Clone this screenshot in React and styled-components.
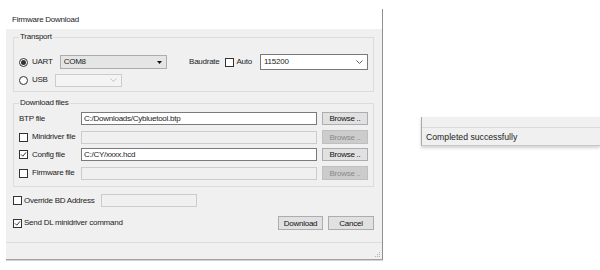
import React from 'react';
import styled, { createGlobalStyle } from 'styled-components';

const GlobalStyle = createGlobalStyle`
  html, body {
    margin: 0;
    padding: 0;
    background: #fff;
  }
  body {
    font-family: "Liberation Sans", Arial, sans-serif;
    font-size: 8px;
    color: #1c1c1c;
  }
`;

const Page = styled.div`
  display: flex;
  align-items: flex-start;
  width: 600px;
  height: 270px;
  overflow: hidden;
`;

const Dialog = styled.div`
  margin: 9px 0 0 6px;
  width: 377px;
  box-sizing: border-box;
  display: flex;
  flex-direction: column;
  background: #f0f0f0;
  border-right: 1px solid #8f8f8f;
  border-bottom: 1px solid #a0a0a0;
  box-shadow: 0 1px 0 #d4d4d4;
  letter-spacing: -0.25px;
`;

const TitleBar = styled.div`
  height: 20px;
  display: flex;
  align-items: center;
  padding-left: 6px;
  background: #fff;
`;

const Body = styled.div`
  display: flex;
  flex-direction: column;
  padding: 3px 8px 12px 7px;
`;

const Group = styled.fieldset`
  margin: ${p => (p.$first ? '0' : '6px 0 0')};
  padding: ${p => p.$pad};
  border: 1px solid #dcdcdc;
  min-width: 0;
  display: flex;
  flex-direction: column;
  gap: ${p => p.$gap}px;
`;

const Legend = styled.legend`
  padding: 0 1px;
  line-height: 10px;
  font-size: 8px;
`;

const Row = styled.div`
  display: flex;
  align-items: center;
  height: ${p => p.$h}px;
`;

const Text = styled.span`
  margin-left: ${p => p.$ml || 0}px;
  white-space: nowrap;
  line-height: 10px;
`;

const RadioCircle = styled.span`
  width: 9px;
  height: 9px;
  box-sizing: border-box;
  border: 1px solid #333;
  border-radius: 50%;
  background: #fff;
  display: inline-flex;
  align-items: center;
  justify-content: center;
  flex: none;
  &::after {
    content: '';
    width: 5px;
    height: 5px;
    border-radius: 50%;
    background: ${p => (p.$on ? '#333' : 'transparent')};
  }
`;

const Box = styled.span`
  width: 9px;
  height: 9px;
  box-sizing: border-box;
  border: 1px solid #333;
  background: #fff;
  display: inline-flex;
  flex: none;
  margin-left: ${p => p.$ml || 0}px;
`;

const CheckBox = ({ on, ml }) => (
  <Box $ml={ml}>
    {on && (
      <svg width="7" height="7" viewBox="0 0 7 7">
        <path d="M1 3.4 L2.8 5.2 L6 1.4" fill="none" stroke="#333" strokeWidth="1" />
      </svg>
    )}
  </Box>
);

const comboLook = {
  readonly: { bg: '#e5e5e5', bd: '#adadad' },
  edit: { bg: '#fff', bd: '#7a7a7a' },
  disabled: { bg: '#f4f4f4', bd: '#cccccc' },
};

const ComboBox = styled.div`
  margin-left: ${p => p.$ml || 0}px;
  width: ${p => p.$w}px;
  height: ${p => p.$h}px;
  box-sizing: border-box;
  display: flex;
  align-items: center;
  justify-content: space-between;
  padding: 0 4px 0 3px;
  background: ${p => comboLook[p.$kind].bg};
  border: 1px solid ${p => comboLook[p.$kind].bd};
  flex: none;
`;

const Combo = ({ kind, w, h, ml, value }) => (
  <ComboBox $kind={kind} $w={w} $h={h} $ml={ml}>
    <Text>{value}</Text>
    {kind === 'readonly' ? (
      <svg width="5" height="3" viewBox="0 0 5 3">
        <path d="M0 0 H5 L2.5 3 Z" fill="#111" />
      </svg>
    ) : (
      <svg width="7" height="4" viewBox="0 0 7 4">
        <path d="M0.5 0.5 L3.5 3.5 L6.5 0.5" fill="none" stroke={kind === 'edit' ? '#606060' : '#c4c4c4'} strokeWidth="1" />
      </svg>
    )}
  </ComboBox>
);

const BaudBlock = styled.div`
  margin-left: auto;
  display: flex;
  align-items: center;
`;

const FileGrid = styled.div`
  display: grid;
  grid-template-columns: 57px 1fr 46px;
  column-gap: 5px;
  align-items: center;
  height: 13px;
`;

const FileLabel = styled.div`
  display: flex;
  align-items: center;
  white-space: nowrap;
`;

const Field = styled.div`
  height: 13px;
  box-sizing: border-box;
  border: 1px solid ${p => (p.$disabled ? '#cccccc' : '#7a7a7a')};
  background: ${p => (p.$disabled ? '#f0f0f0' : '#fff')};
  padding-left: 2px;
  line-height: 11px;
  white-space: nowrap;
  overflow: hidden;
  width: ${p => (p.$w ? `${p.$w}px` : 'auto')};
`;

const Button = styled.div`
  width: ${p => p.$w}px;
  height: ${p => p.$h}px;
  box-sizing: border-box;
  display: flex;
  align-items: center;
  justify-content: center;
  background: ${p => (p.$disabled ? '#cccccc' : '#e1e1e1')};
  border: 1px solid ${p => (p.$disabled ? '#bfbfbf' : '#adadad')};
  color: ${p => (p.$disabled ? '#8a8a8a' : '#111')};
  white-space: nowrap;
`;

const OverrideRow = styled.div`
  margin-top: 7px;
  display: grid;
  grid-template-columns: 88px 96px;
  align-items: center;
  height: 13px;
`;

const SendRow = styled.div`
  margin-top: 9px;
  display: flex;
  align-items: center;
  height: 14px;
`;

const Actions = styled.div`
  margin-left: auto;
  display: flex;
  gap: 5px;
`;

const StatusStrip = styled.div`
  height: 15px;
  border-top: 1px solid #dcdcdc;
  display: flex;
  justify-content: flex-end;
  align-items: flex-end;
  padding: 0 1px 1px 0;
`;

const Fragment = styled.div`
  margin: 117px 0 0 38px;
  flex: 1;
  background: #f0f0f0;
  border-left: 1px solid #a8a8a8;
  border-bottom: 1px solid #c8c8c8;
  box-shadow: 0 2px 3px rgba(0, 0, 0, 0.18);
  display: flex;
  flex-direction: column;
`;

const FragmentTop = styled.div`
  height: 10px;
  border-bottom: 1px solid #d9d9d9;
`;

const StatusText = styled.div`
  height: 17px;
  display: flex;
  align-items: center;
  padding-left: 4px;
  font-size: 8.7px;
  color: #222;
`;

const files = [
  { label: 'BTP file', check: null, value: 'C:/Downloads/Cybluetool.btp' },
  { label: 'Minidriver file', check: false, value: '' },
  { label: 'Config file', check: true, value: 'C:/CY/xxxx.hcd' },
  { label: 'Firmware file', check: false, value: '' },
];

export default function App() {
  return (
    <Page>
      <GlobalStyle />
      <Dialog>
        <TitleBar>Firmware Download</TitleBar>
        <Body>
          <Group $first $pad="12px 5px 4px" $gap={3}>
            <Legend>Transport</Legend>
            <Row $h={16}>
              <RadioCircle $on />
              <Text $ml={4}>UART</Text>
              <Combo kind="readonly" w={107} h={14} ml={7} value="COM8" />
              <BaudBlock>
                <Text>Baudrate</Text>
                <CheckBox ml={5} />
                <Text $ml={3}>Auto</Text>
                <Combo kind="edit" w={108} h={16} ml={8} value="115200" />
              </BaudBlock>
            </Row>
            <Row $h={14}>
              <RadioCircle />
              <Text $ml={4}>USB</Text>
              <Combo kind="disabled" w={67} h={13} ml={7} value="" />
            </Row>
          </Group>

          <Group $pad="4px 5px 7px" $gap={5}>
            <Legend>Download files</Legend>
            {files.map(f => {
              const off = f.check === false;
              return (
                <FileGrid key={f.label}>
                  <FileLabel>
                    {f.check !== null && <CheckBox on={f.check} />}
                    <Text $ml={f.check !== null ? 4 : 0}>{f.label}</Text>
                  </FileLabel>
                  <Field $disabled={off}>{f.value}</Field>
                  <Button $w={46} $h={off ? 14 : 13} $disabled={off}>Browse ..</Button>
                </FileGrid>
              );
            })}
          </Group>

          <OverrideRow>
            <FileLabel>
              <CheckBox />
              <Text $ml={2}>Override BD Address</Text>
            </FileLabel>
            <Field $disabled $w={96} />
          </OverrideRow>

          <SendRow>
            <CheckBox on />
            <Text $ml={2}>Send DL minidriver command</Text>
            <Actions>
              <Button $w={45} $h={14}>Download</Button>
              <Button $w={46} $h={14}>Cancel</Button>
            </Actions>
          </SendRow>
        </Body>
        <StatusStrip>
          <svg width="7" height="7" viewBox="0 0 7 7">
            <g fill="#b4b4b4">
              <rect x="5" y="1" width="1" height="1" />
              <rect x="3" y="3" width="1" height="1" />
              <rect x="5" y="3" width="1" height="1" />
              <rect x="1" y="5" width="1" height="1" />
              <rect x="3" y="5" width="1" height="1" />
              <rect x="5" y="5" width="1" height="1" />
            </g>
          </svg>
        </StatusStrip>
      </Dialog>

      <Fragment>
        <FragmentTop />
        <StatusText>Completed successfully</StatusText>
      </Fragment>
    </Page>
  );
}
